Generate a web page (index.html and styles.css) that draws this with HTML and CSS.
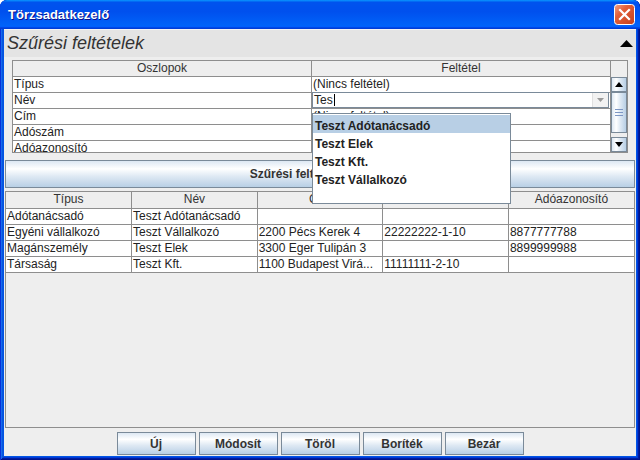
FILE: index.html
```html
<!DOCTYPE html>
<html lang="hu">
<head>
<meta charset="utf-8">
<title>Törzsadatkezelő</title>
<link rel="stylesheet" href="styles.css">
</head>
<body>
<div class="window">
  <div class="titlebar">
    <span class="title">Törzsadatkezelő</span>
    <span class="close">
      <svg width="21" height="21" viewBox="0 0 21 21">
        <defs>
          <linearGradient id="cg" x1="0" y1="0" x2="1" y2="1">
            <stop offset="0" stop-color="#f2a48a"/>
            <stop offset="0.35" stop-color="#e2603a"/>
            <stop offset="1" stop-color="#c43e1a"/>
          </linearGradient>
        </defs>
        <rect x="0.5" y="0.5" width="20" height="20" rx="3" fill="url(#cg)" stroke="#fff"/>
        <path d="M6 6 L15 15 M15 6 L6 15" stroke="#fff" stroke-width="2.2" stroke-linecap="square"/>
      </svg>
    </span>
  </div>
  <div class="client">
    <div class="section-head">
      <span class="section-title">Szűrési feltételek</span>
      <svg class="collapse" width="13" height="7" viewBox="0 0 13 7"><path d="M0 7 L6.5 0 L13 7 Z" fill="#000"/></svg>
    </div>
    <div class="filter-area">
      <div class="filter-pane">
        <div class="fhead">
          <div class="hcell">Oszlopok</div>
          <div class="hcell">Feltétel</div>
        </div>
        <div class="corner"></div>
        <div class="fview">
          <div class="frow"><div class="cell">Típus</div><div class="cell">(Nincs feltétel)</div></div>
          <div class="frow">
            <div class="cell">Név</div>
            <div class="cell editing">
              <div class="combo">
                <span class="combo-text">Tes<span class="caret"></span></span>
                <span class="combo-btn"><svg width="7" height="4" viewBox="0 0 7 4"><path d="M0 0 L7 0 L3.5 4 Z" fill="#9a9a9a"/></svg></span>
              </div>
            </div>
          </div>
          <div class="frow"><div class="cell">Cím</div><div class="cell">(Nincs feltétel)</div></div>
          <div class="frow"><div class="cell">Adószám</div><div class="cell">(Nincs feltétel)</div></div>
          <div class="frow"><div class="cell">Adóazonosító</div><div class="cell">(Nincs feltétel)</div></div>
        </div>
        <div class="vscroll">
          <div class="sb-btn"><svg width="8" height="5" viewBox="0 0 8 5"><path d="M0 5 L4 0 L8 5 Z" fill="#000"/></svg></div>
          <div class="sb-track">
            <div class="sb-thumb"><span class="grip"></span><span class="grip"></span><span class="grip"></span></div>
          </div>
          <div class="sb-btn"><svg width="8" height="5" viewBox="0 0 8 5"><path d="M0 0 L8 0 L4 5 Z" fill="#000"/></svg></div>
        </div>
      </div>
    </div>
    <button class="toggle">Szűrési feltételek törlése</button>
    <div class="results">
      <table class="rtable">
        <thead>
          <tr><th>Típus</th><th>Név</th><th>Cím</th><th>Adószám</th><th>Adóazonosító</th></tr>
        </thead>
        <tbody>
          <tr><td>Adótanácsadó</td><td>Teszt Adótanácsadó</td><td></td><td></td><td></td></tr>
          <tr><td>Egyéni vállalkozó</td><td>Teszt Vállalkozó</td><td>2200 Pécs Kerek 4</td><td>22222222-1-10</td><td>8877777788</td></tr>
          <tr><td>Magánszemély</td><td>Teszt Elek</td><td>3300 Eger Tulipán 3</td><td></td><td>8899999988</td></tr>
          <tr><td>Társaság</td><td>Teszt Kft.</td><td>1100 Budapest Virá...</td><td>11111111-2-10</td><td></td></tr>
        </tbody>
      </table>
    </div>
    <div class="actions">
      <button class="btn">Új</button>
      <button class="btn">Módosít</button>
      <button class="btn">Töröl</button>
      <button class="btn">Boríték</button>
      <button class="btn">Bezár</button>
    </div>
  </div>
  <ul class="popup">
    <li class="sel">Teszt Adótanácsadó</li>
    <li>Teszt Elek</li>
    <li>Teszt Kft.</li>
    <li>Teszt Vállalkozó</li>
  </ul>
</div>
</body>
</html>
```
FILE: styles.css
```css
* { box-sizing: border-box; }
html, body { margin: 0; padding: 0; }
body {
  width: 640px;
  height: 460px;
  overflow: hidden;
  background: #ffffff;
  font-family: "Liberation Sans", Arial, sans-serif;
  font-size: 12px;
  color: #222;
}
.window {
  position: relative;
  width: 640px;
  height: 460px;
  display: flex;
  flex-direction: column;
  padding: 0 4px 4px 4px;
  background: #0055e5;
  border-radius: 7px 7px 0 0;
  overflow: hidden;
  box-shadow: inset 1px 1px #0831d9, inset -1px -1px #00138c,
              inset 2px 2px #166aee, inset -2px -2px #001ea0,
              inset 3px 3px #0855dd, inset -3px -3px #003bda;
}
.titlebar {
  height: 29px;
  margin: 0 -4px;
  flex: none;
  display: flex;
  align-items: center;
  justify-content: space-between;
  padding: 0 5px 1px 8px;
  background: linear-gradient(180deg, #0997ff, #0053ee 8%, #0050ee 40%, #0062f8 85%, #0063fa 90%, #005bff 93%, #003dd7 96%, #003dd7);
  border-radius: 7px 7px 0 0;
}
.title {
  color: #fff;
  font-weight: bold;
  font-size: 13px;
  text-shadow: 1px 1px #0f1089;
  letter-spacing: 0;
}
.close { display: flex; width: 21px; height: 21px; }

.client {
  flex: 1;
  display: flex;
  flex-direction: column;
  background: #eeeeee;
  min-height: 0;
}
.section-head {
  flex: none;
  height: 28px;
  display: flex;
  align-items: center;
  justify-content: space-between;
  padding: 0 3px 0 3px;
  background: #e4e4e4;
  border-top: 1px solid #f4f4f4;
}
.section-title {
  font-size: 18px;
  font-style: italic;
  color: #333;
}
.collapse { display: block; margin-top: -1px; }

.filter-area { flex: none; padding: 3px 8px 0 8px; }
.filter-pane {
  height: 93px;
  border: 1px solid #8e8e8e;
  display: grid;
  grid-template-columns: 1fr 16px;
  grid-template-rows: 16px 1fr;
  background: #eeeeee;
}
.fhead { display: grid; grid-template-columns: 1fr 1fr; }
.hcell {
  background: #eeeeee;
  border-right: 1px solid #8e8e8e;
  border-bottom: 1px solid #8e8e8e;
  text-align: center;
  line-height: 15px;
  color: #333;
}
.corner { background: #eeeeee; }
.fview { overflow: hidden; background: #fff; min-height: 0; }
.frow { display: grid; grid-template-columns: 1fr 1fr; height: 16px; }
.cell {
  border-right: 1px solid #8e8e8e;
  border-bottom: 1px solid #8e8e8e;
  padding-left: 1px;
  line-height: 15px;
  white-space: nowrap;
  overflow: hidden;
  color: #222;
}
.cell.editing { padding: 0; overflow: visible; position: relative; }
.combo {
  margin-top: -1px;
  height: 16px;
  width: calc(100% - 1px);
  border: 1px solid #7a8a99;
  background: #fff;
  display: flex;
}
.combo-text { flex: 1; padding-left: 1px; line-height: 14px; display: flex; align-items: center; }
.caret { display: inline-block; width: 1px; height: 12px; background: #000; margin-left: 1px; }
.combo-btn {
  width: 16px;
  display: flex;
  align-items: center;
  justify-content: center;
  background: #f2f2f2;
  border-left: 1px solid #e0e0e0;
}
.vscroll {
  grid-column: 2;
  grid-row: 2;
  display: flex;
  flex-direction: column;
  background: #eeeeee;
  min-height: 0;
}
.sb-btn {
  flex: none;
  height: 15px;
  display: flex;
  align-items: center;
  justify-content: center;
  border: 1px solid #7a8a99;
  background: linear-gradient(90deg, #dde8f3 0%, #ffffff 30%, #dde8f3 60%, #b8cfe5 100%);
}
.sb-track { flex: 1; padding-bottom: 4px; display: flex; }
.sb-thumb {
  flex: 1;
  border: 1px solid #7a8a99;
  background: linear-gradient(90deg, #dde8f3 0%, #ffffff 30%, #dde8f3 60%, #b8cfe5 100%);
  display: flex;
  flex-direction: column;
  align-items: center;
  justify-content: center;
  gap: 2px;
}
.grip { width: 8px; height: 1px; background: #7c96c4; }

.toggle {
  flex: none;
  margin: 7px 1px 0 1px;
  height: 28px;
  border: 1px solid #7a8a99;
  background: linear-gradient(180deg, #dde8f3 0%, #ffffff 30%, #dde8f3 60%, #b8cfe5 100%);
  font-family: "Liberation Sans", Arial, sans-serif;
  font-weight: bold;
  font-size: 12px;
  color: #333;
  padding: 0;
}
.results {
  flex: 1;
  margin: 3px 1px 0 1px;
  border: 1px solid #8e8e8e;
  background: #eeeeee;
  min-height: 0;
  overflow: hidden;
}
.rtable {
  width: 100%;
  table-layout: fixed;
  border-collapse: collapse;
}
.rtable th {
  height: 16px;
  padding: 0;
  font-weight: normal;
  text-align: center;
  background: #eeeeee;
  color: #333;
  border-right: 1px solid #8e8e8e;
  border-bottom: 1px solid #8e8e8e;
  line-height: 15px;
}
.rtable td {
  height: 16px;
  padding: 0 0 0 1px;
  background: #fff;
  border-right: 1px solid #8e8e8e;
  border-bottom: 1px solid #8e8e8e;
  white-space: nowrap;
  overflow: hidden;
  line-height: 15px;
}
.rtable th:last-child, .rtable td:last-child { border-right: 0; }
.actions {
  flex: none;
  display: flex;
  justify-content: center;
  gap: 3px;
  margin: 4px 0 1px 0;
}
.btn {
  width: 79px;
  height: 23px;
  border: 1px solid #7a8a99;
  background: linear-gradient(180deg, #dde8f3 0%, #ffffff 30%, #dde8f3 60%, #b8cfe5 100%);
  font-family: "Liberation Sans", Arial, sans-serif;
  font-weight: bold;
  font-size: 12px;
  color: #333;
  padding: 0;
}
.popup {
  position: absolute;
  left: 312px;
  top: 113px;
  width: 199px;
  height: 91px;
  margin: 0;
  padding: 1px 0 0 0;
  list-style: none;
  background: #fff;
  border: 1px solid #7a8a99;
}
.popup li {
  height: 18px;
  line-height: 18px;
  padding: 2px 0 0 2px;
  font-weight: bold;
  color: #222;
}
.popup li.sel { background: #b8cfe5; }
```
